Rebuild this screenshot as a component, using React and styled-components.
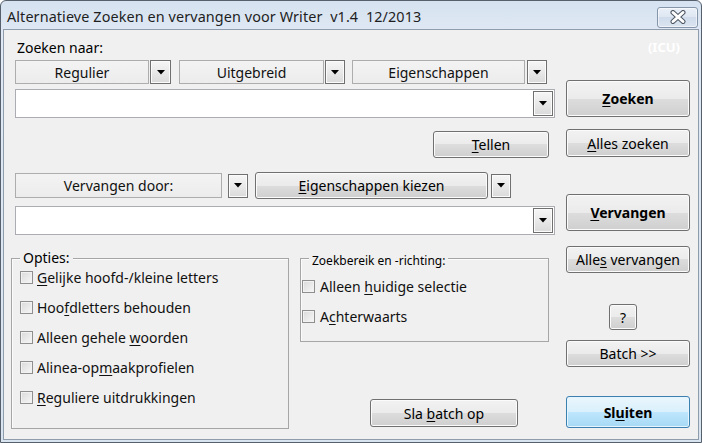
import React from "react";
import styled, { createGlobalStyle, css } from "styled-components";

const GlobalStyle = createGlobalStyle`
  html, body { margin: 0; padding: 0; background: #ffffff; }
  * { box-sizing: border-box; }
`;

const Window = styled.div`
  width: 702px;
  height: 443px;
  border: 1px solid #56606d;
  border-radius: 6px 6px 0 0;
  background: linear-gradient(#d6e2f0, #dfe8f4 30px, #d9e4f1);
  padding: 0 2px 2px;
  display: flex;
  flex-direction: column;
  overflow: hidden;
  font-family: "Noto Sans", "Open Sans", sans-serif;
  color: #000;
`;

const TitleBar = styled.div`
  height: 28px;
  flex: none;
  display: flex;
  align-items: center;
  justify-content: space-between;
  padding: 0 1px 0 4px;
`;

const Title = styled.div`
  font-size: 14.4px;
  color: #1e1e1e;
  white-space: pre;
  letter-spacing: 0.1px;
  margin-top: 2px;
`;

const CloseButton = styled.div`
  width: 41px;
  height: 21px;
  margin-top: 4px;
  border: 1px solid #8596ab;
  border-radius: 3px;
  background: linear-gradient(#eaf0f8, #dde6f2 50%, #d0dcec 50%, #dbe4f0);
  box-shadow: inset 0 0 0 1px rgba(255, 255, 255, 0.55);
  display: flex;
  align-items: center;
  justify-content: center;
`;

const Body = styled.div`
  flex: 1;
  border: 1px solid #8e9cab;
  background: #f0f0f0;
  display: flex;
  padding: 0 8px 0 11px;
  gap: 11px;
`;

const MainColumn = styled.div`
  width: 540px;
  display: flex;
  flex-direction: column;
`;

const SideColumn = styled.div`
  width: 124px;
  display: flex;
  flex-direction: column;
`;

const FieldLabel = styled.div`
  margin-top: 9px;
  font-size: 14px;
  line-height: 18px;
  padding-left: 2px;
`;

const Row = styled.div`
  display: flex;
  align-items: center;
  margin-top: ${(p) => p.$mt || 0}px;
  justify-content: ${(p) => p.$justify || "flex-start"};
`;

const Selector = styled.div`
  width: ${(p) => p.$w}px;
  height: ${(p) => p.$h || 24}px;
  margin-left: ${(p) => p.$ml || 0}px;
  border: 1px solid #adadad;
  background: linear-gradient(#f3f3f3, #ececec);
  display: flex;
  align-items: center;
  justify-content: center;
  font-size: 14px;
  color: #111;
`;

const DropButton = styled.div`
  width: ${(p) => p.$w || 20}px;
  height: ${(p) => p.$h || 24}px;
  margin-left: ${(p) => p.$ml || 0}px;
  border: 1px solid #707070;
  background: linear-gradient(#f6f6f6, #e9e9e9 50%, #dadada);
  box-shadow: inset 0 0 0 1px #fbfbfb;
  display: flex;
  align-items: center;
  justify-content: center;
  flex: none;
`;

const Combo = styled.div`
  margin-top: ${(p) => p.$mt}px;
  height: 29px;
  border: 1px solid #abadb3;
  background: #ffffff;
  display: flex;
  align-items: center;
  justify-content: flex-end;
  padding-right: 1px;
`;

const Button = styled.button`
  font-family: inherit;
  font-size: 14px;
  color: #000;
  font-weight: ${(p) => (p.$bold ? 700 : 400)};
  width: ${(p) => p.$w}px;
  height: ${(p) => p.$h}px;
  margin: ${(p) => p.$mt || 0}px ${(p) => p.$mr || 0}px 0 ${(p) => p.$ml || 0}px;
  padding: 0;
  flex: none;
  border: 1px solid #707070;
  border-radius: 3px;
  background: linear-gradient(#f2f2f2 0%, #ebebeb 50%, #dddddd 50%, #cfcfcf 100%);
  box-shadow: inset 0 0 0 1px #fbfbfb;
  display: flex;
  align-items: center;
  justify-content: center;
  ${(p) =>
    p.$default &&
    css`
      border-color: #3c7fb1;
      background: linear-gradient(#eaf6fd 0%, #d9f0fc 50%, #bee6fd 50%, #a7d9f5 100%);
      box-shadow: inset 0 0 0 1px #e6f5fd;
    `}
`;

const U = styled.span`
  text-decoration: underline;
  text-underline-offset: 2px;
  text-decoration-thickness: 1px;
`;

const BottomArea = styled.div`
  margin-top: 23px;
  display: flex;
  align-items: flex-start;
`;

const GroupBox = styled.div`
  width: ${(p) => p.$w}px;
  height: ${(p) => p.$h}px;
  margin-left: ${(p) => p.$ml || 0}px;
  border: 1px solid #a6a6a6;
  box-shadow: inset 1px 1px 0 #fbfbfb;
  display: flex;
  flex-direction: column;
  flex: none;
`;

const Legend = styled.div`
  align-self: flex-start;
  margin: ${(p) => p.$mt}px 0 0 8px;
  padding: 0 3px;
  background: #f0f0f0;
  font-size: ${(p) => p.$size}px;
  line-height: ${(p) => p.$lh}px;
`;

const OptionList = styled.div`
  display: flex;
  flex-direction: column;
  gap: 10px;
  margin-top: ${(p) => p.$mt}px;
  padding-left: ${(p) => p.$pl}px;
`;

const Option = styled.label`
  display: flex;
  align-items: center;
  height: 20px;
  gap: ${(p) => p.$gap || 4}px;
  font-size: 14px;
  color: #111;
`;

const Check = styled.span`
  width: 13px;
  height: 13px;
  flex: none;
  border: 1px solid #8f8f8f;
  background: linear-gradient(135deg, #dadada, #f7f7f7);
  box-shadow: inset 0 0 0 1px #f2f2f2;
`;

const SideColumnStack = styled.div`
  display: flex;
  flex-direction: column;
`;

const ICU = styled.div`
  align-self: flex-end;
  margin: 8px 10px 0 0;
  font-size: 13px;
  line-height: 18px;
  font-weight: 700;
  color: #ffffff;
`;

const Arrow = () => (
  <svg width="8" height="5" viewBox="0 0 8 5">
    <polygon points="0,0 8,0 4,4.5" fill="#000" />
  </svg>
);

const CloseGlyph = () => (
  <svg width="16" height="14" viewBox="0 0 16 14">
    <path d="M3 2.5 L13 11.5 M13 2.5 L3 11.5" stroke="#4f5864" strokeWidth="5" strokeLinecap="round" />
    <path d="M3 2.5 L13 11.5 M13 2.5 L3 11.5" stroke="#ffffff" strokeWidth="3" strokeLinecap="round" />
  </svg>
);

export default function App() {
  return (
    <>
      <GlobalStyle />
      <Window>
        <TitleBar>
          <Title>Alternatieve Zoeken en vervangen voor Writer  v1.4  12/2013</Title>
          <CloseButton>
            <CloseGlyph />
          </CloseButton>
        </TitleBar>
        <Body>
          <MainColumn>
            <FieldLabel>Zoeken naar:</FieldLabel>
            <Row $mt={3}>
              <Selector $w={134}>Regulier</Selector>
              <DropButton $ml={1} $w={21}>
                <Arrow />
              </DropButton>
              <Selector $w={145} $ml={8}>Uitgebreid</Selector>
              <DropButton $ml={1}>
                <Arrow />
              </DropButton>
              <Selector $w={173} $ml={7}>Eigenschappen</Selector>
              <DropButton $ml={2}>
                <Arrow />
              </DropButton>
            </Row>
            <Combo $mt={5}>
              <DropButton $h={25}>
                <Arrow />
              </DropButton>
            </Combo>
            <Row $mt={13} $justify="flex-end">
              <Button $w={116} $h={27} $mr={6}>
                <span>
                  <U>T</U>ellen
                </span>
              </Button>
            </Row>
            <Row $mt={14}>
              <Selector $w={207} $h={25}>Vervangen door:</Selector>
              <DropButton $ml={6}>
                <Arrow />
              </DropButton>
              <Button $w={233} $h={27} $ml={7}>
                <span>
                  <U>E</U>igenschappen kiezen
                </span>
              </Button>
              <DropButton $ml={3}>
                <Arrow />
              </DropButton>
            </Row>
            <Combo $mt={7}>
              <DropButton $h={25}>
                <Arrow />
              </DropButton>
            </Combo>
            <BottomArea>
              <GroupBox $w={278} $h={171} $ml={-4}>
                <Legend $mt={-10} $size={14} $lh={18}>
                  Opties:
                </Legend>
                <OptionList $mt={0} $pl={8}>
                  <Option>
                    <Check />
                    <span>
                      <U>G</U>elijke hoofd-/kleine letters
                    </span>
                  </Option>
                  <Option>
                    <Check />
                    <span>
                      Hoo<U>f</U>dletters behouden
                    </span>
                  </Option>
                  <Option>
                    <Check />
                    <span>
                      Alleen gehele <U>w</U>oorden
                    </span>
                  </Option>
                  <Option>
                    <Check />
                    <span>
                      Alinea-op<U>m</U>aakprofielen
                    </span>
                  </Option>
                  <Option>
                    <Check />
                    <span>
                      <U>R</U>eguliere uitdrukkingen
                    </span>
                  </Option>
                </OptionList>
              </GroupBox>
              <SideColumnStack>
                <GroupBox $w={249} $h={84} $ml={11}>
                  <Legend $mt={-6} $size={12} $lh={16}>
                    Zoekbereik en -richting:
                  </Legend>
                  <OptionList $mt={7} $pl={1}>
                    <Option $gap={5}>
                      <Check />
                      <span>
                        Alleen <U>h</U>uidige selectie
                      </span>
                    </Option>
                    <Option $gap={5}>
                      <Check />
                      <span>
                        A<U>c</U>hterwaarts
                      </span>
                    </Option>
                  </OptionList>
                </GroupBox>
                <Button $w={148} $h={28} $mt={57} $ml={81}>
                  <span>
                    Sla <U>b</U>atch op
                  </span>
                </Button>
              </SideColumnStack>
            </BottomArea>
          </MainColumn>
          <SideColumn>
            <ICU>(ICU)</ICU>
            <Button $w={124} $h={37} $mt={24} $bold>
              <span>
                <U>Z</U>oeken
              </span>
            </Button>
            <Button $w={124} $h={28} $mt={12}>
              <span>
                <U>A</U>lles zoeken
              </span>
            </Button>
            <Button $w={124} $h={37} $mt={37} $bold>
              <span>
                <U>V</U>ervangen
              </span>
            </Button>
            <Button $w={124} $h={27} $mt={15}>
              <span>
                Alle<U>s</U> vervangen
              </span>
            </Button>
            <Button $w={28} $h={26} $mt={31} $ml={43}>
              ?
            </Button>
            <Button $w={124} $h={27} $mt={10}>
              Batch &gt;&gt;
            </Button>
            <Button $w={124} $h={32} $mt={29} $bold $default>
              <span>
                Sl<U>u</U>iten
              </span>
            </Button>
          </SideColumn>
        </Body>
      </Window>
    </>
  );
}
